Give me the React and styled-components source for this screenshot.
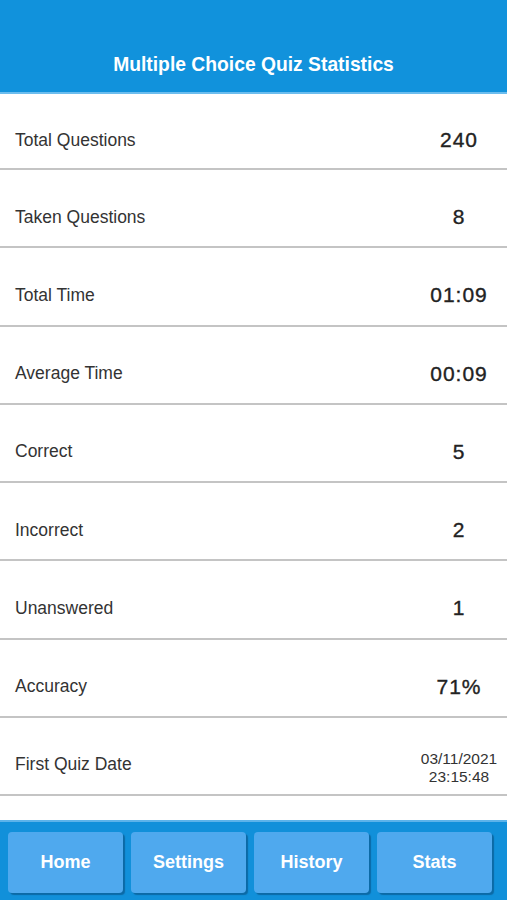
import React from 'react';
import styled, { createGlobalStyle } from 'styled-components';

const stats = [
	{ label: 'Total Questions', value: '240' },
	{ label: 'Taken Questions', value: '8' },
	{ label: 'Total Time', value: '01:09' },
	{ label: 'Average Time', value: '00:09' },
	{ label: 'Correct', value: '5' },
	{ label: 'Incorrect', value: '2' },
	{ label: 'Unanswered', value: '1' },
	{ label: 'Accuracy', value: '71%' },
	{ label: 'First Quiz Date', value: ['03/11/2021', '23:15:48'] },
];

const tabs = ['Home', 'Settings', 'History', 'Stats'];

function App() {
	return (
		<Page>
			<GlobalStyle />
			<Header>
				<Title>Multiple Choice Quiz Statistics</Title>
			</Header>
			<List>
				{stats.map(s => (
					<Row key={s.label}>
						<Label>{s.label}</Label>
						{Array.isArray(s.value) ? (
							<DateValue>
								{s.value.map(v => (
									<span key={v}>{v}</span>
								))}
							</DateValue>
						) : (
							<Value>{s.value}</Value>
						)}
					</Row>
				))}
			</List>
			<Footer>
				{tabs.map(t => (
					<TabButton key={t}>{t}</TabButton>
				))}
			</Footer>
		</Page>
	);
}

export default App;

const GlobalStyle = createGlobalStyle`
	body {
		margin: 0;
		background: #fff;
		font-family: 'Liberation Sans', Arial, sans-serif;
	}
`;

const Page = styled.div`
	width: 507px;
	height: 900px;
	display: flex;
	flex-direction: column;
	overflow: hidden;
`;

const Header = styled.header`
	height: 76px;
	box-sizing: content-box;
	background-color: #1192dc;
	border-bottom: 2px solid #6cbdee;
	display: flex;
	align-items: flex-end;
	justify-content: center;
	padding-bottom: 16px;
`;

const Title = styled.h1`
	margin: 0;
	color: #fff;
	font-size: 19.3px;
	font-weight: bold;
`;

const List = styled.div`
	flex: 1;
	display: flex;
	flex-direction: column;
`;

const Row = styled.div`
	height: 78.25px;
	box-sizing: border-box;
	border-bottom: 2px solid #c4c4c4;
	display: flex;
	align-items: center;
	padding: 18px 0 0 15px;
	&:first-child {
		height: 76px;
	}
`;

const Label = styled.span`
	flex: 1;
	color: #333;
	font-size: 17.5px;
`;

const Value = styled.span`
	width: 96px;
	text-align: center;
	color: #222;
	font-size: 21px;
	letter-spacing: 1px;
	-webkit-text-stroke: 0.35px #222;
`;

const DateValue = styled.span`
	width: 96px;
	margin-top: 6px;
	display: flex;
	flex-direction: column;
	align-items: center;
	color: #333;
	font-size: 15.5px;
	line-height: 18px;
`;

const Footer = styled.nav`
	height: 80px;
	box-sizing: border-box;
	background-color: #1190da;
	border-top: 2px solid #5cb3ea;
	display: grid;
	grid-template-columns: repeat(4, 115px);
	column-gap: 8px;
	padding: 10px 8px 7px;
`;

const TabButton = styled.button`
	border: none;
	border-radius: 4px;
	background-color: #4fa9ee;
	box-shadow: 2px 2px 1px #0c6aa6;
	color: #fff;
	font-family: 'Liberation Sans', Arial, sans-serif;
	font-size: 18px;
	font-weight: bold;
	padding: 0;
`;
